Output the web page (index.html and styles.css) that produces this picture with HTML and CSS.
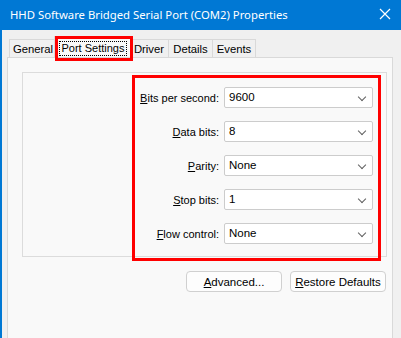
FILE: index.html
```html
<!DOCTYPE html>
<html lang="en">
<head>
    <meta charset="UTF-8">
    <title>HHD Software Bridged Serial Port (COM2) Properties</title>
    <link rel="stylesheet" href="styles.css">
</head>
<body>
    <div class="window">
        <div class="titlebar">
            <span class="title">HHD Software Bridged Serial Port (COM2) Properties</span>
            <svg class="close" width="12" height="12" viewBox="0 0 12 12">
                <path d="M1 1 L11 11 M11 1 L1 11" stroke="#fff" stroke-width="1.2" fill="none"/>
            </svg>
        </div>

        <!-- Tabs -->
        <div class="tabs">
            <div class="tab tab-general">General</div>
            <div class="tab tab-port active"><span class="focus">Port Settings</span></div>
            <div class="tab tab-driver">Driver</div>
            <div class="tab tab-details">Details</div>
            <div class="tab tab-events">Events</div>
        </div>

        <div class="page">
            <div class="group">
                <div class="form">
                    <label><u>B</u>its per second:</label>
                    <div class="combo">9600<span class="arrow"></span></div>
                    <label><u>D</u>ata bits:</label>
                    <div class="combo">8<span class="arrow"></span></div>
                    <label><u>P</u>arity:</label>
                    <div class="combo">None<span class="arrow"></span></div>
                    <label><u>S</u>top bits:</label>
                    <div class="combo">1<span class="arrow"></span></div>
                    <label><u>F</u>low control:</label>
                    <div class="combo">None<span class="arrow"></span></div>
                </div>
            </div>
            <div class="buttons">
                <button><u>A</u>dvanced...</button>
                <button><u>R</u>estore Defaults</button>
            </div>
        </div>

        <!-- annotation boxes -->
        <div class="mark mark-tab"></div>
        <div class="mark mark-form"></div>
    </div>
</body>
</html>
```

FILE: styles.css
```css
body {
    margin: 0;
    font-family: "Liberation Sans", Arial, sans-serif;
    font-size: 11px;
    color: #000;
}
.window {
    position: relative;
    width: 399px;
    height: 338px;
    overflow: hidden;
    background-color: #F0F0F0;
    border-left: 2px solid #0078D4;
}
.titlebar {
    height: 30px;
    background-color: #0078D4;
    color: #fff;
    display: flex;
    align-items: center;
    justify-content: space-between;
    padding: 0 10px 0 8px;
}
.title {
    font-family: "Noto Sans", sans-serif;
    font-size: 11.3px;
    margin-top: -1px;
}
.close {
    margin-top: -2px;
}

/* Tabs */
.tabs {
    display: flex;
    margin: 9px 0 0 7px;
    height: 18px;
}
.tab {
    box-sizing: border-box;
    height: 18px;
    line-height: 19px;
    text-align: center;
    font-size: 11.3px;
    background-color: #F0F0F0;
    border: 1px solid #D9D9D9;
    border-bottom: none;
    margin-left: -1px;
}
.tab-general { width: 48px; margin-left: 0; }
.tab-port { width: 78px; }
.tab-driver { width: 40px; }
.tab-details { width: 45px; }
.tab-events { width: 44px; }
.tab.active {
    background-color: #F9F9F9;
    height: 21px;
    margin: -3px -2px 0 -3px;
    position: relative;
    z-index: 1;
    padding-top: 2px;
}
.focus {
    display: inline-block;
    line-height: 13px;
    padding: 0 2px;
    border: 1px dotted #000;
    font-size: 11px;
}

.page {
    margin-left: 5px;
    width: 384px;
    height: 300px;
    background-color: #F9F9F9;
    border: 1px solid #D9D9D9;
}
.group {
    margin: 14px 0 0 14px;
    width: 363px;
    height: 183px;
    border: 1px solid #DCDCDC;
}
.form {
    display: grid;
    grid-template-columns: auto 149px;
    justify-content: end;
    align-items: center;
    column-gap: 5px;
    row-gap: 13px;
    padding: 14px 13px 0 0;
}
label {
    text-align: right;
    font-size: 11px;
}
.combo {
    position: relative;
    height: 19px;
    line-height: 19px;
    padding-left: 4px;
    font-size: 11.5px;
    background-color: #fff;
    border: 1px solid #CCCCCC;
    border-radius: 2px;
}
.arrow {
    position: absolute;
    right: 7px;
    top: 6px;
    width: 5px;
    height: 5px;
    border-right: 1px solid #606060;
    border-bottom: 1px solid #606060;
    transform: rotate(45deg);
}
.buttons {
    display: flex;
    justify-content: flex-end;
    gap: 8px;
    margin: 14px 6px 0 0;
}
button {
    width: 96px;
    height: 21px;
    padding: 0;
    font-family: "Liberation Sans", Arial, sans-serif;
    font-size: 11.5px;
    background-color: #FDFDFD;
    border: 1px solid #D0D0D0;
    border-radius: 4px;
}

/* red annotation rectangles */
.mark {
    position: absolute;
    border: 3px solid #FF0000;
    z-index: 2;
}
.mark-tab {
    left: 53px;
    top: 36px;
    width: 72px;
    height: 19px;
}
.mark-form {
    left: 130px;
    top: 75px;
    width: 243px;
    height: 180px;
}
```
